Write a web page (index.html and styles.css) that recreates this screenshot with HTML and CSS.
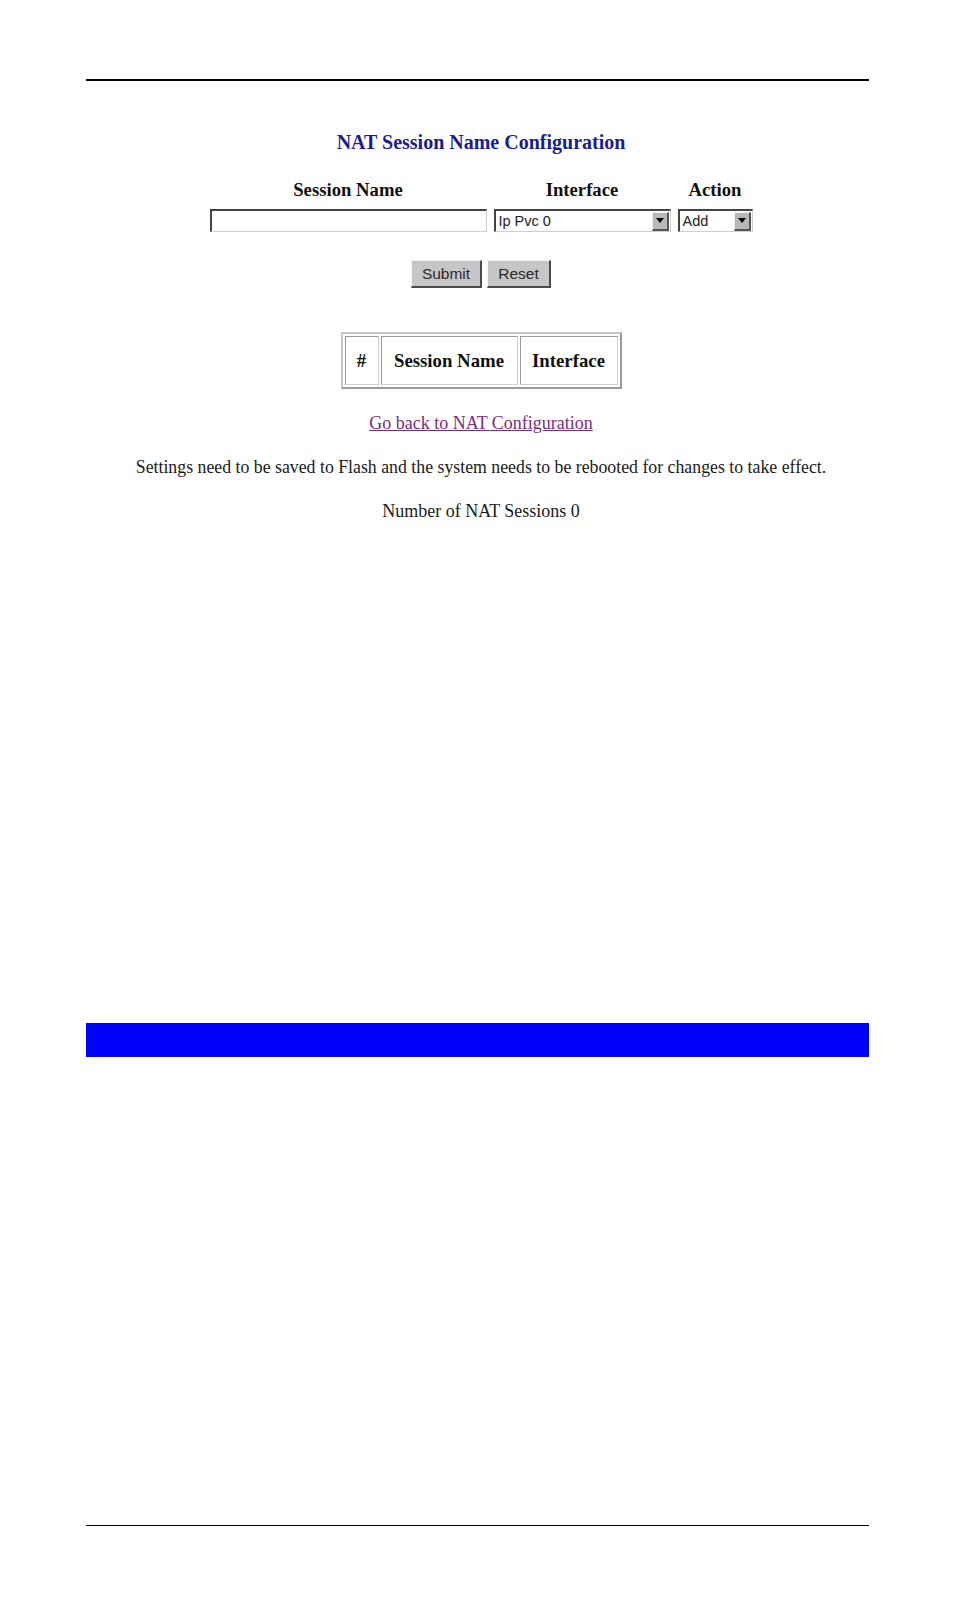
FILE: index.html
```html
<!DOCTYPE html>
<html>
<head>
<meta charset="utf-8">
<title>NAT Session Name Configuration</title>
<link rel="stylesheet" href="styles.css">
</head>
<body>
<div class="page">
  <div class="rule rule-top"></div>
  <main class="content">
    <h1 class="title">NAT Session Name Configuration</h1>
    <form class="entry">
      <div class="col col-name">
        <label class="col-head" for="sname">Session Name</label>
        <input id="sname" class="text-input" type="text">
      </div>
      <div class="col col-iface">
        <span class="col-head">Interface</span>
        <div class="select select-iface">
          <span class="select-value">Ip Pvc 0</span>
          <span class="select-arrow"><svg width="8" height="5" viewBox="0 0 8 5"><path d="M0 0H8L4 5Z" fill="#000"/></svg></span>
        </div>
      </div>
      <div class="col col-action">
        <span class="col-head">Action</span>
        <div class="select select-action">
          <span class="select-value">Add</span>
          <span class="select-arrow"><svg width="8" height="5" viewBox="0 0 8 5"><path d="M0 0H8L4 5Z" fill="#000"/></svg></span>
        </div>
      </div>
    </form>
    <div class="buttons">
      <button class="btn btn-submit" type="button">Submit</button>
      <button class="btn btn-reset" type="button">Reset</button>
    </div>
    <table class="sessions">
      <tr>
        <th class="c-num">#</th>
        <th class="c-name">Session Name</th>
        <th class="c-iface">Interface</th>
      </tr>
    </table>
    <p class="back"><a href="#">Go back to NAT Configuration</a></p>
    <p class="note">Settings need to be saved to Flash and the system needs to be rebooted for changes to take effect.</p>
    <p class="count">Number of NAT Sessions 0</p>
  </main>
  <div class="bluebar"></div>
  <div class="rule rule-bottom"></div>
</div>
</body>
</html>
```
FILE: styles.css
```css
html, body {
  margin: 0;
  padding: 0;
  background: #ffffff;
}

body {
  font-family: "Liberation Serif", "Times New Roman", serif;
  color: #111111;
}

.page {
  width: 783px;
  margin-left: 86px;
  padding-top: 79px;
  display: flex;
  flex-direction: column;
}

.rule {
  width: 100%;
}

.rule-top {
  border-top: 2px solid #000000;
}

.rule-bottom {
  margin-top: 468px;
  border-top: 1px solid #000000;
}

.content {
  display: flex;
  flex-direction: column;
  align-items: center;
  padding-left: 7px;
}

.title {
  margin: 49px 0 0 0;
  font-size: 20px;
  line-height: 24px;
  font-weight: bold;
  color: #1c1c92;
}

.entry {
  margin-top: 26px;
  display: flex;
  gap: 7px;
}

.col {
  display: flex;
  flex-direction: column;
  align-items: center;
  gap: 9px;
}

.col-head {
  font-size: 18.7px;
  line-height: 20px;
  font-weight: bold;
  color: #111111;
}

.text-input {
  box-sizing: border-box;
  width: 277px;
  height: 23px;
  margin: 0;
  border-style: solid;
  border-width: 2px 1px 1px 2px;
  border-color: #444444 #cfcfcf #cfcfcf #444444;
  background: #ffffff;
  padding: 0 3px;
}

.select {
  box-sizing: border-box;
  height: 23px;
  display: flex;
  align-items: center;
  justify-content: space-between;
  border-style: solid;
  border-width: 2px 1px 1px 2px;
  border-color: #444444 #cfcfcf #cfcfcf #444444;
  background: #ffffff;
  padding: 0 1px 0 3px;
  font-family: "Liberation Sans", Arial, sans-serif;
  font-size: 14.5px;
  color: #222222;
}

.select-iface {
  width: 177px;
}

.select-action {
  width: 75px;
}

.select-arrow {
  box-sizing: border-box;
  width: 17px;
  height: 19px;
  display: flex;
  align-items: center;
  justify-content: center;
  background: #b8b8b8;
  border-style: solid;
  border-width: 1px 2px 2px 1px;
  border-color: #eeeeee #555555 #555555 #eeeeee;
}

.buttons {
  margin-top: 28px;
  display: flex;
  gap: 5px;
}

.btn {
  box-sizing: border-box;
  height: 28px;
  margin: 0;
  padding: 0;
  background: #c6c6c6;
  border-style: solid;
  border-width: 1px 2px 2px 1px;
  border-color: #f2f2f2 #4a4a4a #4a4a4a #f2f2f2;
  font-family: "Liberation Sans", Arial, sans-serif;
  font-size: 15.5px;
  color: #2a2a2a;
}

.btn-submit {
  width: 71px;
}

.btn-reset {
  width: 64px;
}

.sessions {
  margin-top: 44px;
  border-collapse: separate;
  border-spacing: 2px;
  border-style: solid;
  border-width: 2px;
  border-color: #c8c8c8 #9a9a9a #9a9a9a #c8c8c8;
}

.sessions th {
  box-sizing: border-box;
  height: 49px;
  padding: 0;
  border-style: solid;
  border-width: 1px;
  border-color: #9a9a9a #d0d0d0 #d0d0d0 #9a9a9a;
  font-size: 18.8px;
  font-weight: bold;
  color: #111111;
  text-align: center;
}

.c-num { width: 34px; }
.c-name { width: 137px; }
.c-iface { width: 98px; }

.back,
.note,
.count {
  margin: 22px 0 0 0;
  font-size: 18px;
  line-height: 22px;
  text-align: center;
  color: #1a1a1a;
}

.note {
  font-size: 17.8px;
}

.back {
  margin-top: 23px;
}

.back a {
  color: #7a2d80;
  text-decoration: underline;
}

.bluebar {
  margin-top: 501px;
  height: 34px;
  background: #0000ff;
}
```
